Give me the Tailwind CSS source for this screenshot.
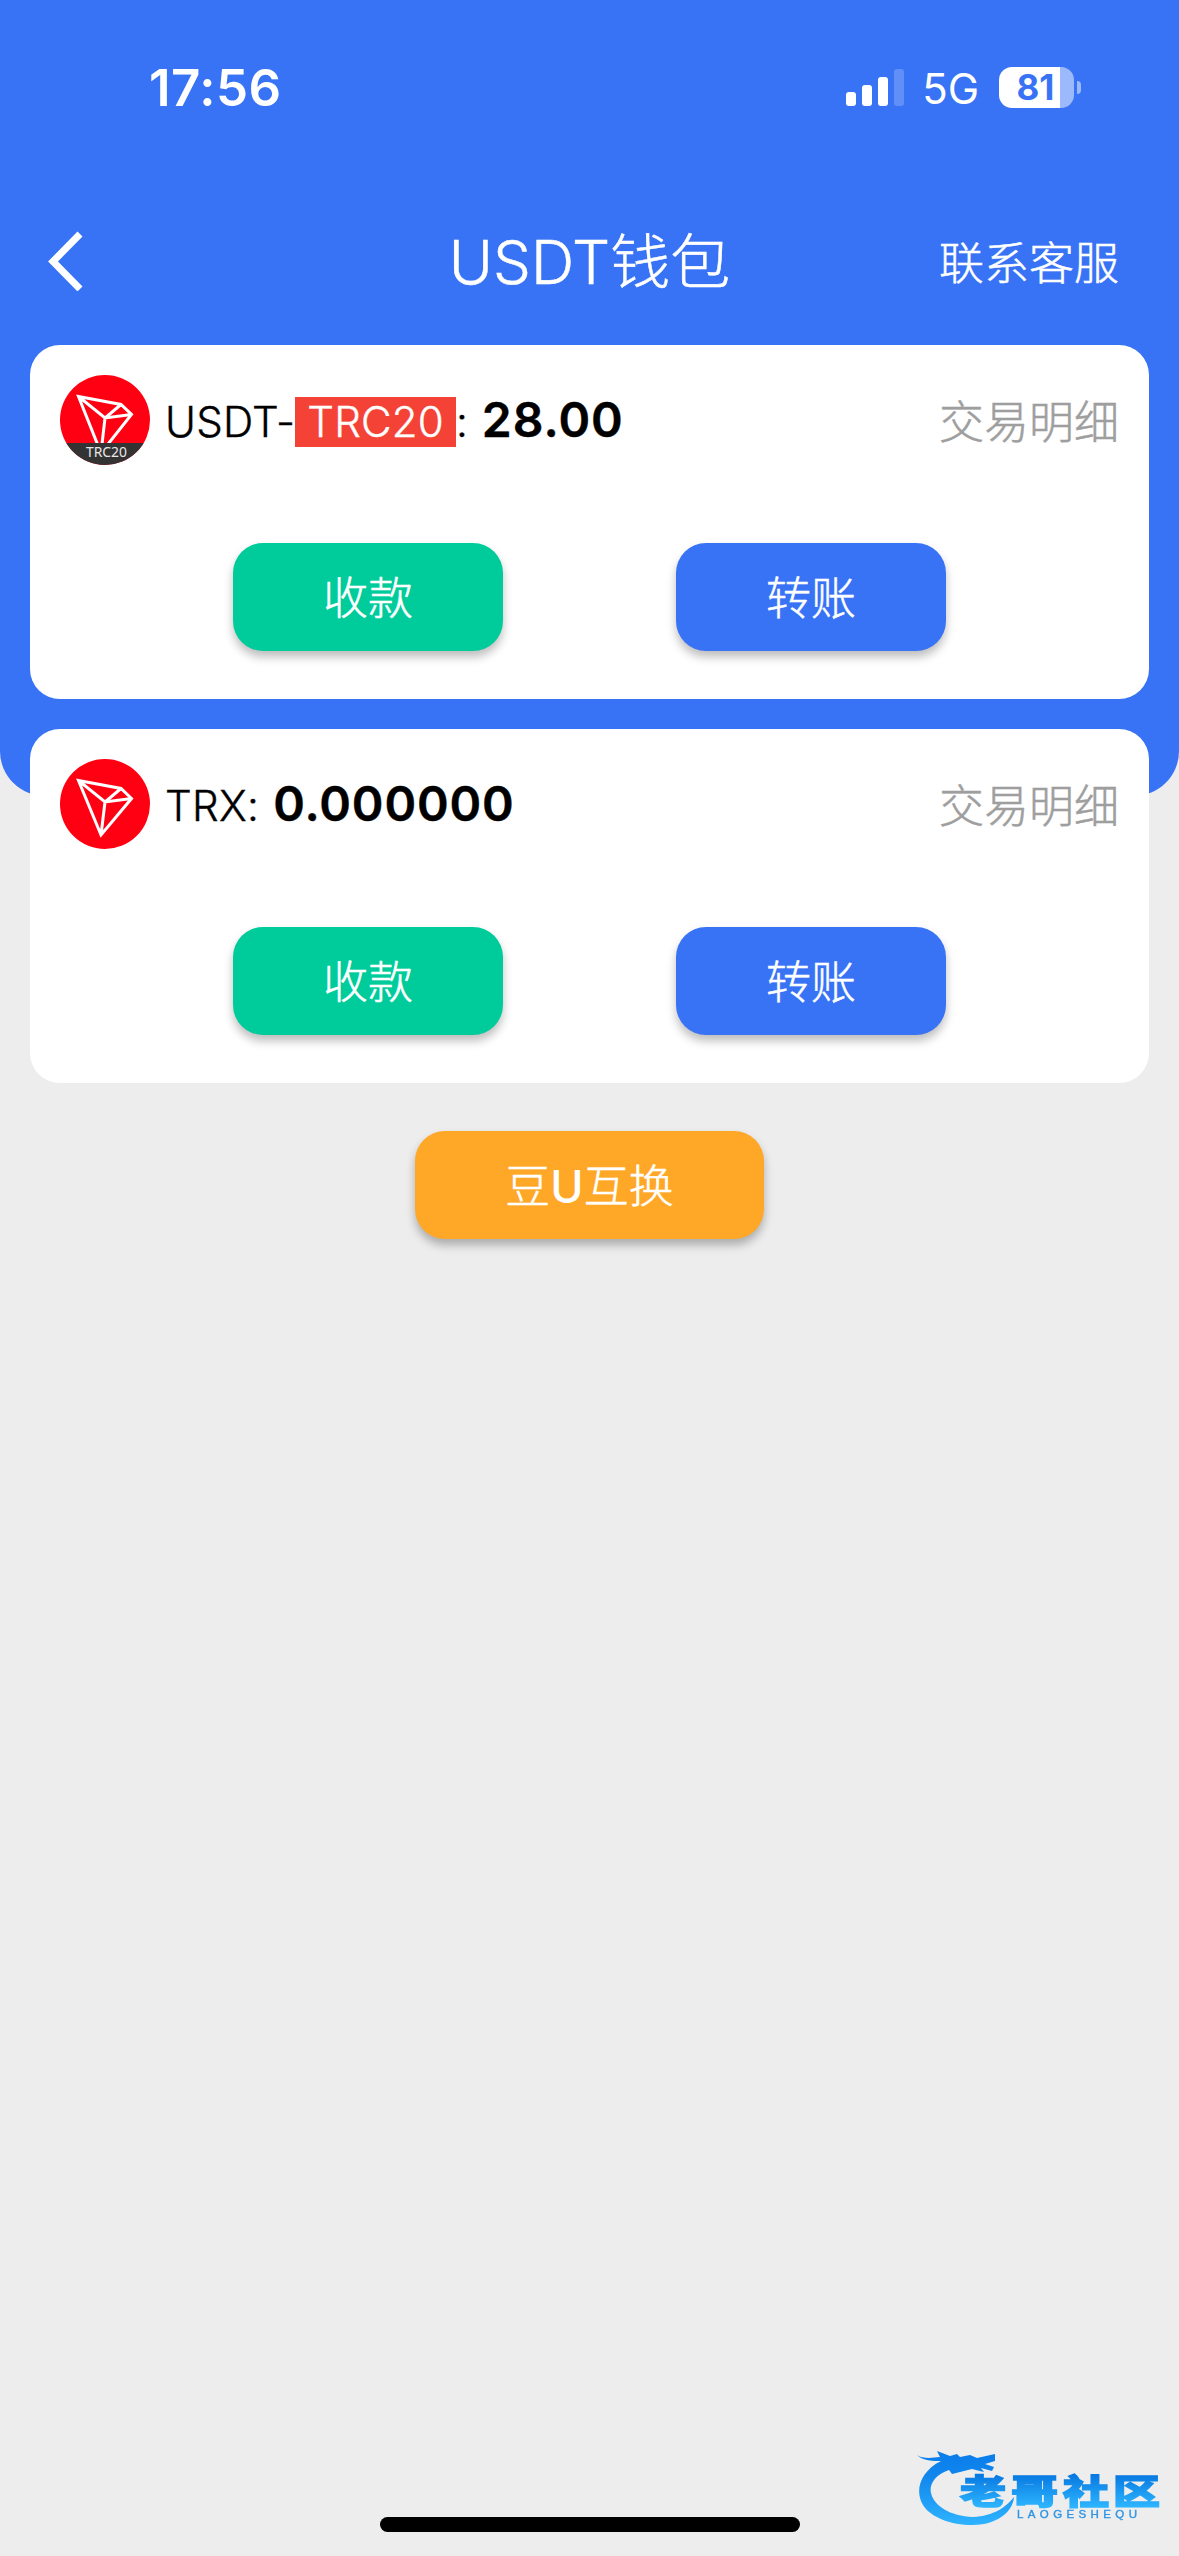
<!DOCTYPE html>
<html lang="zh-CN">
<head>
<meta charset="utf-8">
<title>USDT钱包</title>
<script src="https://cdn.jsdelivr.net/npm/@tailwindcss/browser@4"></script>
</head>
<body class="relative h-[2556px] w-[1179px] overflow-hidden bg-[#ededed] font-['Inter','Noto_Sans_CJK_SC',sans-serif] text-black">
<div class="absolute inset-x-0 top-0 h-[796px] rounded-b-[45px] bg-[#3873f6]"></div>

<div class="relative flex h-full flex-col">
  <!-- status bar -->
  <div class="flex h-[176px] items-center justify-between pr-[98px] pl-[149px] text-white">
    <div class="pb-[1px] text-[51px] leading-none font-semibold tracking-[0.5px]">17:56</div>
    <div class="flex items-center">
      <svg class="mr-[18px] h-[38px] w-[58px]" viewBox="0 0 58 38" fill="#fff">
        <rect y="23" width="10" height="14" rx="3"/><rect x="16" y="16" width="10" height="21" rx="3"/><rect x="32" y="8" width="10" height="29" rx="3"/><rect x="48" width="10" height="37" rx="3" opacity=".2"/>
      </svg>
      <div class="pt-[2px] text-[42px] leading-none">5G</div>
      <div class="ml-[20px] flex items-center pb-[2px]">
        <div class="flex h-[41px] w-[75px] items-center justify-center rounded-[13px] bg-linear-to-r from-white from-[81%] to-[#9cb9fb] to-[81%] pr-[2px] text-[35px] leading-none font-bold text-[#3873f6]">81</div>
        <div class="ml-[3px] h-[13px] w-[4px] rounded-r-full bg-[#9cb9fb]"></div>
      </div>
    </div>
  </div>

  <!-- title bar -->
  <div class="grid h-[169px] grid-cols-[1fr_auto_1fr] items-center px-[48px] text-white [-webkit-text-stroke:0.5px_currentColor]">
    <svg class="h-[60px] w-[36px]" viewBox="0 0 36 60" fill="none" stroke="#fff" stroke-width="7"><path d="M32 3 5 30.500 32 58"/></svg>
    <h1 class="pt-[2px] text-[60px] leading-none font-light">USDT钱包</h1>
    <div class="pt-[6px] pr-[12px] text-right text-[45px] leading-none font-light">联系客服</div>
  </div>

  <!-- wallets -->
  <div class="flex flex-col gap-[30px] px-[30px]">
    <section class="h-[354px] rounded-[30px] bg-white px-[30px] pt-[30px]">
      <div class="flex h-[90px] items-center">
        <svg class="h-[90px] w-[90px]" viewBox="0 0 90 90">
          <defs><clipPath id="c"><circle cx="45" cy="45" r="45"/></clipPath></defs>
          <g clip-path="url(#c)"><path fill="#ff0013" d="M0 0h90v90H0z"/>
          <path d="M18.500 21.500 61 29.500 71.500 39.500 41 78ZM18.500 21.500 45 43 71.500 39.500M61 29.500 45 43 41 78" fill="none" stroke="#fff" stroke-width="3"/>
          <path fill="#333" d="M0 68h90v22H0z"/>
          <text x="46.500" y="82" text-anchor="middle" font-size="14.500" fill="#e8e8e8" font-family="Noto Sans" textLength="41" lengthAdjust="spacingAndGlyphs">TRC20</text></g>
        </svg>
        <div class="ml-[15px] flex items-baseline pt-[2px] text-[42px] leading-[50px] font-light [-webkit-text-stroke:0.4px_currentColor]"><span class="tracking-[0.3px]">USDT-</span><span class="bg-[#f44336] px-[12px] tracking-[0.2px] text-white">TRC20</span><span>:</span><b class="ml-[14px] text-[48px] font-semibold tracking-[1px]">28.00</b></div>
        <div class="ml-auto pt-[4px] text-[45px] leading-none font-light text-[#9e9e9e] [-webkit-text-stroke:0.5px_currentColor]">交易明细</div>
      </div>
      <div class="mt-[78px] flex justify-evenly text-[45px] font-light text-white [-webkit-text-stroke:0.5px_currentColor]">
        <button class="h-[108px] w-[270px] rounded-[30px] bg-[#00cc9b] pt-[4px] shadow-[0_6px_10px_rgba(0,0,0,.26)]">收款</button>
        <button class="h-[108px] w-[270px] rounded-[30px] bg-[#3873f6] pt-[4px] shadow-[0_6px_10px_rgba(0,0,0,.26)]">转账</button>
      </div>
    </section>
    <section class="h-[354px] rounded-[30px] bg-white px-[30px] pt-[30px]">
      <div class="flex h-[90px] items-center">
        <svg class="h-[90px] w-[90px]" viewBox="0 0 90 90">
          <circle cx="45" cy="45" r="45" fill="#ff0013"/>
          <path d="M18.500 21.500 61 29.500 71.500 39.500 41 76ZM18.500 21.500 45 43 71.500 39.500M61 29.500 45 43 41 76" fill="none" stroke="#fff" stroke-width="3"/>
        </svg>
        <div class="ml-[15px] flex items-baseline pt-[2px] text-[42px] leading-[50px] font-light [-webkit-text-stroke:0.4px_currentColor]"><span class="tracking-[0.3px]">TRX:</span><b class="ml-[14px] text-[48px] font-semibold tracking-[0.9px]">0.000000</b></div>
        <div class="ml-auto pt-[4px] text-[45px] leading-none font-light text-[#9e9e9e] [-webkit-text-stroke:0.5px_currentColor]">交易明细</div>
      </div>
      <div class="mt-[78px] flex justify-evenly text-[45px] font-light text-white [-webkit-text-stroke:0.5px_currentColor]">
        <button class="h-[108px] w-[270px] rounded-[30px] bg-[#00cc9b] pt-[4px] shadow-[0_6px_10px_rgba(0,0,0,.26)]">收款</button>
        <button class="h-[108px] w-[270px] rounded-[30px] bg-[#3873f6] pt-[4px] shadow-[0_6px_10px_rgba(0,0,0,.26)]">转账</button>
      </div>
    </section>
  </div>
  <button class="mt-[48px] h-[108px] w-[349px] self-center rounded-[30px] bg-[#ffa726] pt-[4px] text-[45px] font-light text-white shadow-[0_6px_10px_rgba(0,0,0,.28)] [-webkit-text-stroke:0.5px_currentColor]">豆<span class="font-medium [-webkit-text-stroke:0]">U</span>互换</button>
  <div class="mt-auto mb-[24px] h-[15px] w-[420px] self-center rounded-full bg-black"></div>
</div>

<!-- community watermark -->
<svg class="absolute top-[2430px] left-[900px] h-[126px] w-[279px] blur-[0.7px]" viewBox="0 0 279 126">
  <defs><linearGradient id="g" x1="0" y1="20" x2="0" y2="96" gradientUnits="userSpaceOnUse"><stop stop-color="#087bea"/><stop offset=".35" stop-color="#1187ed"/><stop offset="1" stop-color="#2fb4ff"/></linearGradient>
  <linearGradient id="t" x1="0" y1="45" x2="0" y2="77" gradientUnits="userSpaceOnUse"><stop stop-color="#0879e2"/><stop offset="1" stop-color="#2db5ff"/></linearGradient></defs>
  <path fill="url(#g)" d="M17 25C23 29 31 28 40 27L37 21 50 26 57 24 60 27 70 25 77 28 95 24 95 31 85 34 94 37 92 41 81 38 84 42 72 39 64 41 52 44 49 40C35 45 29 54 31 63 34 76 50 86 73 87 94 86 106 77 114 67 113 79 103 90 84 94 61 98 32 90 23 75 14 60 21 41 41 31 33 31 23 31 17 25Z"/>
  <g font-family="Noto Sans CJK SC" font-weight="900" font-size="34" fill="url(#t)" stroke="url(#t)" stroke-width="1.500">
  <text x="60" y="74" textLength="46" lengthAdjust="spacingAndGlyphs">老</text><text x="111" y="74" textLength="47" lengthAdjust="spacingAndGlyphs">哥</text><text x="163" y="74" textLength="46" lengthAdjust="spacingAndGlyphs">社</text><text x="213" y="74" textLength="47" lengthAdjust="spacingAndGlyphs">区</text></g>
  <text x="117" y="88" font-family="Liberation Sans" font-size="11.500" fill="#2f95e6" stroke="#2f95e6" stroke-width=".4" textLength="120">LAOGESHEQU</text>
</svg>
</body>
</html>
